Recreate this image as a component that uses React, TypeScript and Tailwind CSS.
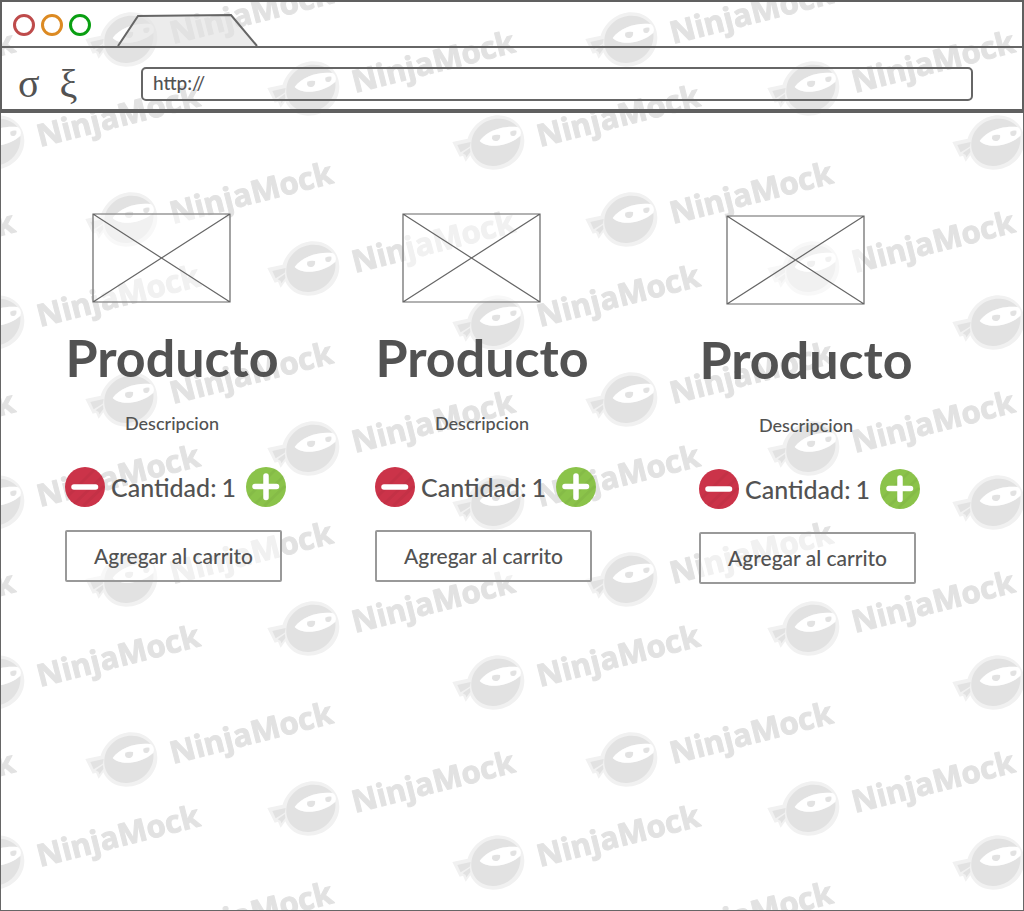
import React from "react";

const MARKS = [
  { x: 130, y: 39 },
  { x: 312, y: 88 },
  { x: 497, y: 142 },
];
const TILE_X = [-500, 0, 500];
const TILE_Y = [-180, 0, 180];

function NinjaMark({ x, y }: { x: number; y: number }) {
  return (
    <g transform={`translate(${x} ${y})`}>
      <g transform="scale(0.3333) translate(-156 -142)">
        <path
          d="M22 142L68 132C82 90 120 62 160 62C206 62 238 95 238 138C238 188 195 225 144 225C110 225 86 206 76 182L62 201L54 183L44 186Z"
          fill="#f1f1f1"
        />
        <path
          d="M80 137C86 100 122 72 160 72C184 72 205 82 217 97C176 92 126 107 104 139C124 162 190 157 226 124C231 172 192 214 144 214C103 214 72 180 80 137Z"
          fill="#e2e2e2"
        />
        <path d="M37 151L77 142L74 156L47 173Z" fill="#e2e2e2" />
        <path d="M75 160L53 176L62 181L64 188L76 172Z" fill="#e2e2e2" />
        <path
          d="M104 139C126 107 176 92 217 97Q227 100 228 115L226 123C190 157 124 162 104 139Z"
          fill="#ffffff"
        />
        <path d="M142 123Q153 118 165 121Q167 134 158 138Q143 141 141 131Z" fill="#e2e2e2" />
        <path d="M196 111Q206 106 214 108Q216 118 209 123Q197 126 196 118Z" fill="#e2e2e2" />
      </g>
      <text
        transform="translate(43 5) rotate(-14.3)"
        fontFamily="'Open Sans', 'Noto Sans', sans-serif"
        fontWeight="700"
        fontSize="31"
        fill="#e2e2e2"
        stroke="#e2e2e2"
        strokeWidth="1"
        strokeLinejoin="round"
      >
        NinjaMock
      </text>
    </g>
  );
}

function Watermark() {
  return (
    <svg
      className="pointer-events-none absolute inset-0 -z-10 h-full w-full"
      aria-hidden="true"
    >
      <defs>
        <pattern id="ninja" width="500" height="180" patternUnits="userSpaceOnUse">
          {MARKS.map((m) =>
            TILE_X.map((dx) =>
              TILE_Y.map((dy) => (
                <NinjaMark key={`${m.x}-${dx}-${dy}`} x={m.x + dx} y={m.y + dy} />
              )),
            ),
          )}
        </pattern>
      </defs>
      <rect width="100%" height="100%" fill="url(#ninja)" />
    </svg>
  );
}

function Browser() {
  return (
    <header className="border-2 border-b-4 border-[#606060]">
      <div className="flex h-[46px] items-end border-b-2 border-[#666666]">
        <div className="flex gap-[6px] self-center pt-[2px] pl-[11px]">
          <button aria-label="Cerrar" className="size-[22px] rounded-full border-[3px] border-[#be4b4b] bg-white" />
          <button aria-label="Minimizar" className="size-[22px] rounded-full border-[3px] border-[#dc8a22] bg-white" />
          <button aria-label="Maximizar" className="size-[22px] rounded-full border-[3px] border-[#0a9f12] bg-white" />
        </div>
        <button aria-label="Pestaña" className="ml-[26px]">
          <svg width="142" height="32" viewBox="0 0 142 32" className="block">
            <path d="M1 32L21 2L114 1L140 32" fill="#e2e2e2" fillOpacity="0.65" stroke="#666666" strokeWidth="2" />
          </svg>
        </button>
      </div>
      <div className="flex h-[61px] items-start pt-[19px] pr-[49px] text-[#525252]">
        <nav className="flex w-[139px] shrink-0 gap-5 pl-4 font-['Liberation_Serif',serif] text-[40px] leading-[34px]">
          <button aria-label="Atrás">σ</button>
          <button aria-label="Adelante">ξ</button>
        </nav>
        <input
          aria-label="Dirección"
          defaultValue="http://"
          className="h-[34px] min-w-0 flex-1 rounded-[5px] border-2 border-[#666666] px-[10px] pb-1 font-[Lato,sans-serif] text-[19px] font-medium outline-none"
        />
      </div>
    </header>
  );
}

function RoundButton({ kind }: { kind: "minus" | "plus" }) {
  const plus = kind === "plus";
  return (
    <button aria-label={plus ? "Agregar uno" : "Quitar uno"} className="size-10 shrink-0">
      <svg viewBox="0 0 40 40" className="block size-10">
        <circle cx="20" cy="20" r="20" fill={plus ? "#8bc34a" : "#cb3349"} />
        <path
          d="M2 30L30 2M9 37L38 9M18 39L39 19"
          stroke="#000000"
          strokeOpacity="0.04"
          strokeWidth="3"
        />
        <path
          d={plus ? "M9 19.5H30.500M20 9V30.500" : "M9 20H30.500"}
          stroke="#ffffff"
          strokeWidth="5.500"
          strokeLinecap="round"
        />
      </svg>
    </button>
  );
}

function Product() {
  return (
    <article className="w-[221px]">
      <svg
        role="img"
        aria-label="Imagen del producto"
        viewBox="0 0 139 90"
        className="ml-[27px] block h-[90px] w-[139px] bg-white/50"
      >
        <path d="M1 1H138V89H1ZM1 1L138 89M138 1L1 89" fill="none" stroke="#666666" strokeWidth="1.200" />
      </svg>
      <h2 className="mt-[22px] w-[214px] text-center text-[52px] leading-[64px] font-bold">Producto</h2>
      <p className="mt-[22px] w-[214px] text-center text-[18px] leading-6 font-medium">Descripcion</p>
      <div className="mt-8 flex items-center">
        <RoundButton kind="minus" />
        <p className="flex grow justify-between pr-[10px] pl-[6px] text-[25px] leading-10 font-medium">
          <span>Cantidad:</span>
          <span>1</span>
        </p>
        <RoundButton kind="plus" />
      </div>
      <button className="mt-[23px] h-[52px] w-[217px] rounded-[2px] border-2 border-[#999999] bg-white/50 text-[21px] font-medium">
        Agregar al carrito
      </button>
    </article>
  );
}

export default function App() {
  return (
    <div className="relative isolate flex min-h-screen flex-col bg-white">
      <Watermark />
      <Browser />
      <main className="grid grow grid-cols-[310fr_324fr_324fr] items-start border border-t-0 border-[#666666] pl-16 pt-[100px] font-[Lato,sans-serif] text-[#525252]">
        <Product />
        <Product />
        <div className="pt-[2px]">
          <Product />
        </div>
      </main>
    </div>
  );
}
